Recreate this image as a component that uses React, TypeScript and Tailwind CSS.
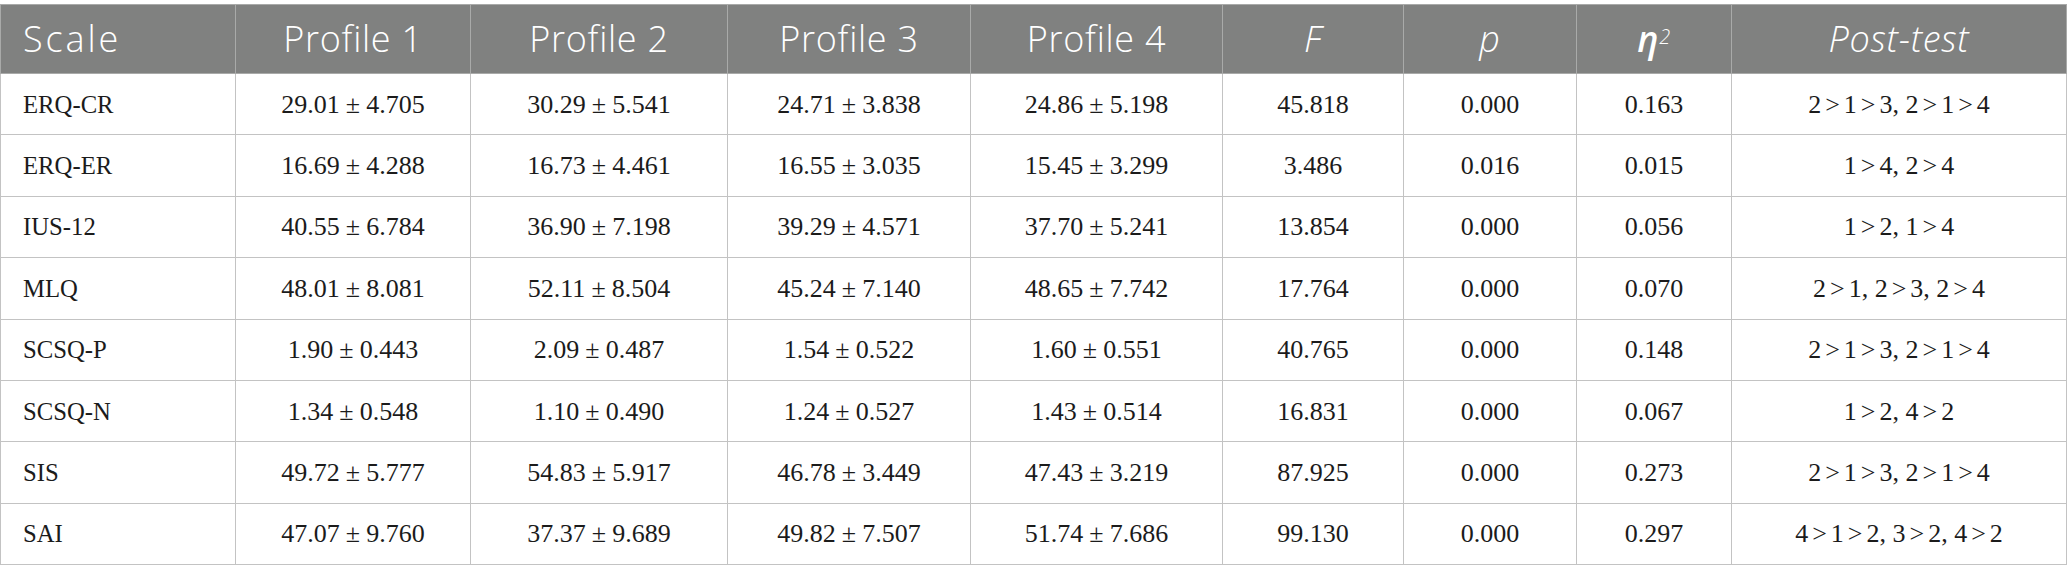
const cols = [235, 235, 257, 243, 252, 181, 173, 155, 335];

const rows = [
  ["ERQ-CR", "29.01±4.705", "30.29±5.541", "24.71±3.838", "24.86±5.198", "45.818", "0.000", "0.163", "2>1>3, 2>1>4"],
  ["ERQ-ER", "16.69±4.288", "16.73±4.461", "16.55±3.035", "15.45±3.299", "3.486", "0.016", "0.015", "1>4, 2>4"],
  ["IUS-12", "40.55±6.784", "36.90±7.198", "39.29±4.571", "37.70±5.241", "13.854", "0.000", "0.056", "1>2, 1>4"],
  ["MLQ", "48.01±8.081", "52.11±8.504", "45.24±7.140", "48.65±7.742", "17.764", "0.000", "0.070", "2>1, 2>3, 2>4"],
  ["SCSQ-P", "1.90±0.443", "2.09±0.487", "1.54±0.522", "1.60±0.551", "40.765", "0.000", "0.148", "2>1>3, 2>1>4"],
  ["SCSQ-N", "1.34±0.548", "1.10±0.490", "1.24±0.527", "1.43±0.514", "16.831", "0.000", "0.067", "1>2, 4>2"],
  ["SIS", "49.72±5.777", "54.83±5.917", "46.78±3.449", "47.43±3.219", "87.925", "0.000", "0.273", "2>1>3, 2>1>4"],
  ["SAI", "47.07±9.760", "37.37±9.689", "49.82±7.507", "51.74±7.686", "99.130", "0.000", "0.297", "4>1>2, 3>2, 4>2"],
];

// operators get a narrow gap on each side, like the journal's typesetting
function Cell({ text }: { text: string }) {
  const parts = text.split(/([±>])/);
  return (
    <>
      {parts.map((p, i) =>
        p === "±" ? (
          <span key={i} className="mx-[6px]">{p}</span>
        ) : p === ">" ? (
          <span key={i} className="mx-[4px]">{p}</span>
        ) : (
          <span key={i}>{p}</span>
        )
      )}
    </>
  );
}

function Head({ children, italic }: { children: React.ReactNode; italic?: boolean }) {
  return (
    <th
      className={`border border-[#a9aaa9] font-light text-white text-center text-[36px] tracking-[0.02em] ${italic ? "italic" : ""}`}
    >
      {children}
    </th>
  );
}

export default function App() {
  return (
    <div className="w-[2067px] h-[582px] bg-white pt-[4px]">
      <table className="table-fixed border-collapse w-[2067px] font-['Liberation_Serif',serif] text-[#1b1b1b]">
        <colgroup>
          {cols.map((w, i) => (
            <col key={i} style={{ width: w }} />
          ))}
        </colgroup>
        <thead className="font-['Open_Sans',sans-serif]">
          <tr className="h-[69px] bg-[#808180]">
            <th className="border border-[#a9aaa9] font-light text-white text-left pl-[22px] text-[36px] tracking-[0.08em]">Scale</th>
            <Head>Profile 1</Head>
            <Head>Profile 2</Head>
            <Head>Profile 3</Head>
            <Head>Profile 4</Head>
            <Head italic>F</Head>
            <Head italic>p</Head>
            <Head italic>
              <span className="font-semibold">η</span>
              <sup className="text-[20px] relative -top-[8px]">2</sup>
            </Head>
            <Head italic>Post-test</Head>
          </tr>
        </thead>
        <tbody className="text-[26px]">
          {rows.map((r) => (
            <tr key={r[0]} className="h-[61.4px]">
              <td className="border border-[#c3c3c3] pl-[22px]">
                <span className="inline-block origin-left scale-x-[0.95]">{r[0]}</span>
              </td>
              {r.slice(1).map((c, i) => (
                <td key={i} className="border border-[#c3c3c3] text-center">
                  <Cell text={c} />
                </td>
              ))}
            </tr>
          ))}
        </tbody>
      </table>
    </div>
  );
}
